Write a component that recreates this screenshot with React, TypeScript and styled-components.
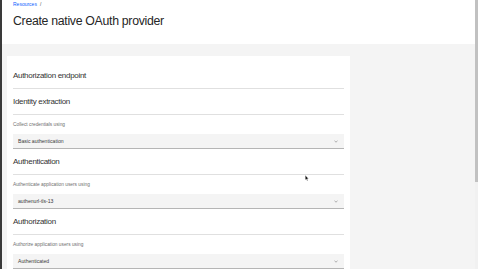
import React from 'react'
import styled, { createGlobalStyle } from 'styled-components'

const GlobalStyle = createGlobalStyle`
    html, body {
        margin:0;
        padding:0;
        width:478px;
        height:269px;
        overflow:hidden;
        background:#f4f4f4;
        font-family:"Liberation Sans", Arial, sans-serif;
    }
`

const Shell = styled.div`
    display:grid;
    grid-template-columns:2px 1fr 3px;
    width:478px;
    height:269px;
    overflow:hidden;
    position:relative;
`

const Edge = styled.div`
    background:#3a3a3a;
`

const Main = styled.div`
    display:flex;
    flex-direction:column;
    background:#f4f4f4;
    min-width:0;
`

const Header = styled.header`
    height:44px;
    box-sizing:border-box;
    background:#fff;
    padding:0 11px;
`

const Crumbs = styled.nav`
    display:flex;
    gap:3px;
    height:8px;
    line-height:8px;
    font-size:5px;
    a{
        color:#0f62fe;
        text-decoration:none;
    }
    span{
        color:#525252;
    }
`

const Title = styled.h1`
    margin:5px 0 0;
    font-size:12.3px;
    line-height:16px;
    font-weight:400;
    letter-spacing:-0.3px;
    color:#262626;
`

const Body = styled.div`
    flex:1;
    padding:12px 0 0 5px;
`

const Card = styled.section`
    width:343px;
    height:100%;
    box-sizing:border-box;
    background:#fff;
    padding:7px 6px 0;
`

const Heading = styled.h2`
    margin:0;
    height:26px;
    box-sizing:border-box;
    display:flex;
    align-items:center;
    border-bottom:1px solid #e0e0e0;
    font-size:8px;
    font-weight:400;
    letter-spacing:-0.3px;
    color:#333;
`

const Field = styled.div`
    display:flex;
    flex-direction:column;
`

const Label = styled.label`
    padding-top:6px;
    height:8px;
    line-height:8px;
    font-size:4.8px;
    color:#6f6f6f;
`

const Select = styled.div`
    margin-top:5px;
    height:15px;
    box-sizing:border-box;
    display:flex;
    align-items:center;
    justify-content:space-between;
    padding:0 6px 0 5px;
    background:#f4f4f4;
    border-bottom:1px solid #b5b5b5;
    font-size:5.1px;
    color:#393939;
`

const Scroll = styled.div`
    display:flex;
    flex-direction:column;
    background:#f1f1f1;
    .thumb{
        height:182px;
        background:#c1c1c1;
    }
`

const Cursor = styled.svg`
    position:absolute;
    left:305px;
    top:175px;
`

const Chevron = () => (
    <svg width="4" height="3" viewBox="0 0 4 3">
        <polyline points="0.5,0.8 2,2.2 3.5,0.8" fill="none" stroke="#8d8d8d" strokeWidth="0.7"/>
    </svg>
)

const sections = [
    { title:'Authorization endpoint' },
    { title:'Identity extraction', label:'Collect credentials using', value:'Basic authentication' },
    { title:'Authentication', label:'Authenticate application users using', value:'authenurl-tls-13' },
    { title:'Authorization', label:'Authorize application users using', value:'Authenticated' },
]

const App:React.FC = () => {
    return (
        <>
            <GlobalStyle/>
            <Shell>
                <Edge/>
                <Main>
                    <Header>
                        <Crumbs>
                            <a href="#">Resources</a>
                            <span>/</span>
                        </Crumbs>
                        <Title>Create native OAuth provider</Title>
                    </Header>
                    <Body>
                        <Card>
                            {sections.map(s => (
                                <React.Fragment key={s.title}>
                                    <Heading>{s.title}</Heading>
                                    {s.label && (
                                        <Field>
                                            <Label>{s.label}</Label>
                                            <Select>
                                                <span>{s.value}</span>
                                                <Chevron/>
                                            </Select>
                                        </Field>
                                    )}
                                </React.Fragment>
                            ))}
                        </Card>
                    </Body>
                </Main>
                <Scroll><div className='thumb'/></Scroll>
                <Cursor width="4" height="6" viewBox="0 0 4 6">
                    <path d="M0.3 0.3 L0.3 5 L1.3 4 L2.1 5.7 L2.8 5.4 L2.1 3.8 L3.5 3.8 Z" fill="#111" stroke="#fff" strokeWidth="0.3"/>
                </Cursor>
            </Shell>
        </>
    )
}

export default App
